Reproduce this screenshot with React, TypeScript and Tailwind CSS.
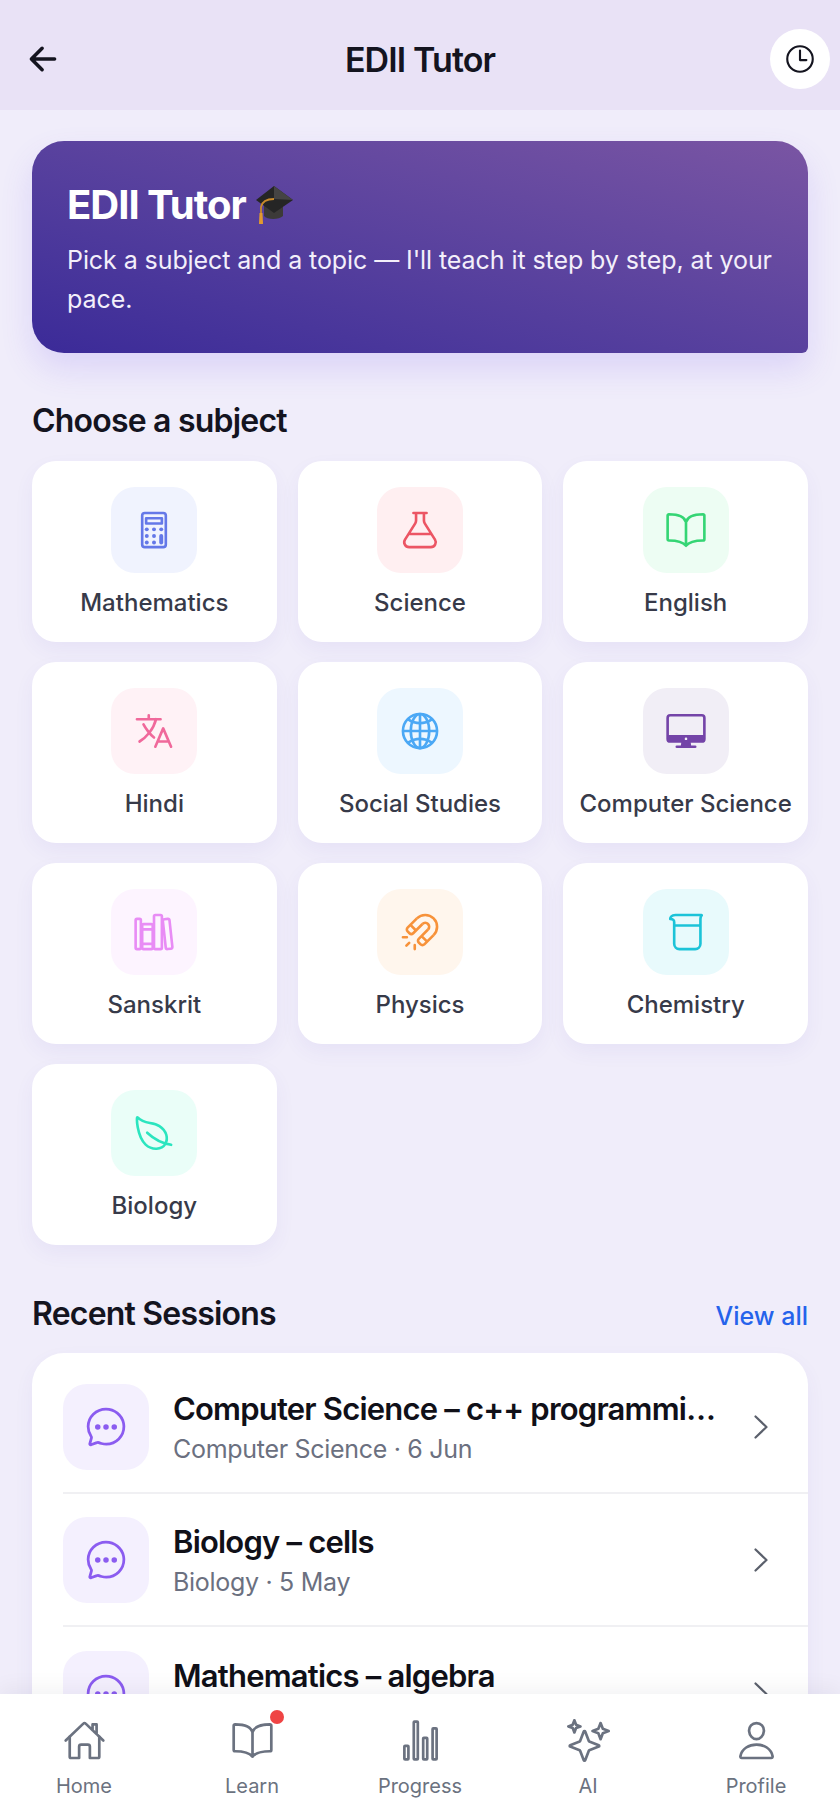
import React from "react";
import {
  IoArrowBack,
  IoTimeOutline,
  IoCalculatorOutline,
  IoFlaskOutline,
  IoBookOutline,
  IoLanguageOutline,
  IoGlobeOutline,
  IoDesktopOutline,
  IoLibraryOutline,
  IoMagnetOutline,
  IoBeakerOutline,
  IoLeafOutline,
  IoChatbubbleEllipsesOutline,
  IoHomeOutline,
  IoStatsChartOutline,
  IoSparklesOutline,
  IoPersonOutline,
} from "react-icons/io5";

const subjects = [
  { name: "Mathematics", Icon: IoCalculatorOutline, tile: "bg-[#f0f3fe]", color: "text-[#6478e8]" },
  { name: "Science", Icon: IoFlaskOutline, tile: "bg-[#ffeff1]", color: "text-[#ec5564]" },
  { name: "English", Icon: IoBookOutline, tile: "bg-[#edfdf3]", color: "text-[#35d574]" },
  { name: "Hindi", Icon: IoLanguageOutline, tile: "bg-[#fff2f6]", color: "text-[#f0699b]" },
  { name: "Social Studies", Icon: IoGlobeOutline, tile: "bg-[#edf7ff]", color: "text-[#4ba8f5]" },
  { name: "Computer Science", Icon: IoDesktopOutline, tile: "bg-[#f1eef6]", color: "text-[#7444a8]" },
  { name: "Sanskrit", Icon: IoLibraryOutline, tile: "bg-[#fdf4ff]", color: "text-[#e88cf5]" },
  { name: "Physics", Icon: IoMagnetOutline, tile: "bg-[#fff6ed]", color: "text-[#f7923a]" },
  { name: "Chemistry", Icon: IoBeakerOutline, tile: "bg-[#e8fafc]", color: "text-[#1cc3d8]" },
  { name: "Biology", Icon: IoLeafOutline, tile: "bg-[#eafef8]", color: "text-[#2be5bf]" },
];

const sessions = [
  { title: "Computer Science – c++ programmi…", sub: "Computer Science · 6 Jun" },
  { title: "Biology – cells", sub: "Biology · 5 May" },
  { title: "Mathematics – algebra", sub: "" },
];

const tabs = [
  { label: "Home", Icon: IoHomeOutline },
  { label: "Learn", Icon: IoBookOutline, dot: true },
  { label: "Progress", Icon: IoStatsChartOutline },
  { label: "AI", Icon: IoSparklesOutline },
  { label: "Profile", Icon: IoPersonOutline },
];

function GradCap() {
  return (
    <svg width="40" height="40" viewBox="0 0 40 40">
      <path d="M10 20v11c3 4 15 4 19 0V20z" fill="#3c3a38" />
      <path d="M20 1 39 15 20 28 2 15z" fill="#252525" />
      <path d="M20 1 39 15 20 14z" fill="#454443" />
      <path d="M20 14C12 14 8 17 7 22v10" fill="none" stroke="#c98a2b" strokeWidth="1.8" />
      <path d="M5.500 28h3l.5 11H5z" fill="#e29a2e" />
    </svg>
  );
}

function Chevron() {
  return (
    <svg width="16" height="26" viewBox="0 0 16 26" fill="none" stroke="#5b606c" strokeWidth="2.2" strokeLinecap="round" strokeLinejoin="round">
      <path d="M2.500 2.500 13.500 13 2.500 23.500" />
    </svg>
  );
}

export default function App() {
  return (
    <div className="w-[840px] h-[1820px] flex flex-col overflow-hidden bg-[#f0edfa] font-['Inter',sans-serif] text-[#14141f]">
      <header className="h-[110px] shrink-0 bg-[#e9e2f6] flex items-center px-[10px] pt-[8px]">
        <div className="flex-1">
          <IoArrowBack size={38} className="ml-[14px] text-[#14141f]" />
        </div>
        <h1 className="text-[34px] font-semibold tracking-[-0.9px]">EDII Tutor</h1>
        <div className="flex-1 flex justify-end">
          <div className="w-[60px] h-[60px] rounded-full bg-white flex items-center justify-center">
            <IoTimeOutline size={34} />
          </div>
        </div>
      </header>

      <main className="flex-1 min-h-0 overflow-hidden px-[32px] pt-[31px]">
        <section className="h-[212px] rounded-[32px] rounded-br-[6px] bg-gradient-to-tr from-[#3b2a98] to-[#7a55a3] pl-[35px] pr-[20px] pt-[40px] shadow-[0_16px_32px_rgba(110,80,240,0.16)] text-white">
          <div className="flex items-center gap-[8px] h-[48px]">
            <span className="text-[40px] font-bold tracking-[-1px]">EDII Tutor</span>
            <GradCap />
          </div>
          <p className="mt-[12px] text-[25px] leading-[39px] tracking-[-0.08px] text-[#f3effa]">
            Pick a subject and a topic — I'll teach it step by step, at your pace.
          </p>
        </section>

        <h2 className="mt-[50px] h-[36px] leading-[36px] text-[32px] font-semibold tracking-[-0.8px]">Choose a subject</h2>

        <div className="mt-[22px] grid grid-cols-3 gap-x-[21px] gap-y-[20px]">
          {subjects.map(({ name, Icon, tile, color }) => (
            <div
              key={name}
              className="h-[181px] rounded-[24px] bg-white shadow-[0_8px_20px_rgba(90,70,180,0.06)] flex flex-col items-center pt-[26px]"
            >
              <div className={`w-[86px] h-[86px] rounded-[24px] flex items-center justify-center ${tile} ${color}`}>
                <Icon size={42} />
              </div>
              <span className="mt-[14px] text-[24px] leading-[32px] font-medium text-[#373a49] whitespace-nowrap">{name}</span>
            </div>
          ))}
        </div>

        <div className="mt-[49px] flex items-center justify-between h-[40px]">
          <h2 className="text-[32px] font-semibold tracking-[-0.8px]">Recent Sessions</h2>
          <span className="pt-[6px] text-[25px] font-medium text-[#2563eb]">View all</span>
        </div>

        <div className="mt-[19px] rounded-t-[32px] bg-white shadow-[0_8px_20px_rgba(90,70,180,0.06)] pl-[31px] pt-[8px]">
          {sessions.map((s, i) => (
            <div key={s.title} className={`h-[133px] flex items-center pt-[23px] pb-[22px] ${i < 2 ? "border-b-2 border-[#f0f0f3]" : ""}`}>
              <div className="w-[86px] h-[86px] shrink-0 rounded-[24px] bg-[#f4f0fe] flex items-center justify-center text-[#8b5cf0]">
                <IoChatbubbleEllipsesOutline size={44} />
              </div>
              <div className="ml-[24px] w-[580px] min-w-0 pt-[3px]">
                <div className="whitespace-nowrap text-[31px] leading-[40px] font-semibold tracking-[-0.8px] text-[#101018]">{s.title}</div>
                {s.sub ? (
                  <div className="mt-[1px] text-[25px] leading-[38px] tracking-[-0.3px] text-[#6b7080]">{s.sub}</div>
                ) : (
                  <div className="mt-[1px] h-[38px]" />
                )}
              </div>
              <Chevron />
            </div>
          ))}
        </div>
      </main>

      <nav className="h-[126px] shrink-0 bg-white grid grid-cols-5 shadow-[0_-6px_20px_rgba(20,20,40,0.05)] relative">
        {tabs.map(({ label, Icon, dot }) => (
          <div key={label} className="flex flex-col items-center pt-[25px] text-[#6b7280]">
            <div className="relative">
              <Icon size={43} />
              {dot && <span className="absolute -top-[9px] -right-[10px] w-[14px] h-[14px] rounded-full bg-[#ef4444]" />}
            </div>
            <span className="mt-[10px] text-[20px] leading-[28px]">{label}</span>
          </div>
        ))}
      </nav>
    </div>
  );
}
